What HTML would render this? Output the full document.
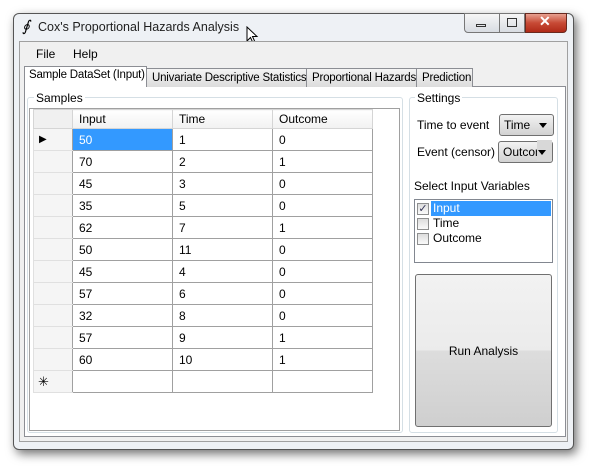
<!DOCTYPE html><html><head><style>
*{box-sizing:border-box;margin:0;padding:0}
body{width:592px;height:468px;background:#fff;font-family:"Liberation Sans",sans-serif;font-size:12px;color:#000;position:relative;overflow:hidden}
.a{position:absolute;white-space:nowrap}
.win{left:13px;top:13px;width:561px;height:437px;background:#eef1f5;border:1px solid #555;border-radius:6px;box-shadow:3px 4px 10px rgba(0,0,0,.55)}
.client{left:19px;top:41px;width:549px;height:401px;background:#f0f0f0;border:1px solid #a0a0a0}
.tab{top:68px;height:19px;border:1px solid #8c8e94;border-bottom:none;background:linear-gradient(#f4f4f4,#dcdcdc);padding:3px 0 0 5px;font-size:11.5px;letter-spacing:-0.2px}
.panel{left:24px;top:86px;width:542px;height:351px;background:#fff;border:1px solid #8c8e94}
.grp{border:1px solid #d5dfe5;border-radius:3px}
.lbl{background:#fff;padding:0 2px}
td{border:1px solid #a0a0a0;height:22px;padding:0 0 0 6px;font-size:12px}
table{border-collapse:collapse;position:absolute;left:33px;top:109px}
.hd td{height:19px;background:linear-gradient(#fff,#f1f1f1);border-color:#d5d5d5;}
.rh{background:#f5f5f5;border-color:#e0e0e0 #a0a0a0 #e0e0e0 #e0e0e0;width:39px;padding:0}
.cb{display:inline-block;width:12px;height:12px;border:1px solid #8e8f8f;background:linear-gradient(#ddd,#fafafa);vertical-align:middle;margin-right:4px}
.dd{height:22px;border:1px solid #707070;border-radius:3px;background:linear-gradient(#f2f2f2,#d2d2d2);padding:3px 0 0 4px;overflow:hidden}
.arr{position:absolute;border:4px solid transparent;border-top:5px solid #000}
</style></head><body>
<div class="a win"></div>
<div class="a" style="left:22px;top:17px;font-family:'Liberation Serif',serif;font-style:italic;font-size:15px">∮</div>
<div class="a" style="left:38px;top:20px;font-size:12.5px;color:#1e1e1e">Cox's Proportional Hazards Analysis</div>
<div class="a" style="left:464px;top:13px;width:36px;height:20px;border:1px solid #777;border-radius:0 0 0 4px;background:linear-gradient(#f6f6f6,#d8dce2)"></div>
<div class="a" style="left:476px;top:24px;width:10px;height:3px;border:1px solid #333"></div>
<div class="a" style="left:499px;top:13px;width:26px;height:20px;border:1px solid #777;background:linear-gradient(#f6f6f6,#d8dce2)"></div>
<div class="a" style="left:507px;top:18px;width:10px;height:9px;border:1px solid #333"></div>
<div class="a" style="left:525px;top:13px;width:42px;height:20px;border:1px solid #6a2a20;border-radius:0 0 4px 0;background:linear-gradient(#e8a090,#c74a35 50%,#b02a18)"></div>
<div class="a" style="left:539px;top:13px;color:#fff;font-weight:bold;font-size:14px">✕</div>
<svg class="a" style="left:246px;top:26px" width="14" height="20"><path d="M1 1 L1 15 L4.5 11.5 L7 17 L9 16 L6.5 10.5 L11 10.5 Z" fill="#fff" stroke="#000"/></svg>
<div class="a client"></div>
<div class="a" style="left:36px;top:47px">File</div>
<div class="a" style="left:73px;top:47px">Help</div>
<div class="a panel"></div>
<div class="a tab" style="left:146px;width:161px">Univariate Descriptive Statistics</div>
<div class="a tab" style="left:306px;width:111px">Proportional Hazards</div>
<div class="a tab" style="left:416px;width:57px">Prediction</div>
<div class="a tab" style="left:24px;top:66px;height:21px;width:123px;background:#fff;padding:2px 0 0 4px">Sample DataSet (Input)</div>
<div class="a grp" style="left:27px;top:97px;width:376px;height:336px"></div>
<div class="a lbl" style="left:34px;top:91px">Samples</div>
<div class="a" style="left:29px;top:108px;width:371px;height:323px;border:1px solid #a0a0a0;background:#fff"></div>
<table>
<tr class="hd"><td class="rh" style="background:#f0f0f0"></td><td style="width:100px">Input</td><td style="width:100px">Time</td><td style="width:100px">Outcome</td></tr>
<tr><td class="rh" style="font-size:10px;padding-left:5px">▶</td><td style="background:#3399ff;color:#fff">50</td><td>1</td><td>0</td></tr>
<tr><td class="rh"></td><td>70</td><td>2</td><td>1</td></tr>
<tr><td class="rh"></td><td>45</td><td>3</td><td>0</td></tr>
<tr><td class="rh"></td><td>35</td><td>5</td><td>0</td></tr>
<tr><td class="rh"></td><td>62</td><td>7</td><td>1</td></tr>
<tr><td class="rh"></td><td>50</td><td>11</td><td>0</td></tr>
<tr><td class="rh"></td><td>45</td><td>4</td><td>0</td></tr>
<tr><td class="rh"></td><td>57</td><td>6</td><td>0</td></tr>
<tr><td class="rh"></td><td>32</td><td>8</td><td>0</td></tr>
<tr><td class="rh"></td><td>57</td><td>9</td><td>1</td></tr>
<tr><td class="rh"></td><td>60</td><td>10</td><td>1</td></tr>
<tr><td class="rh" style="padding-left:4px;font-size:13px">✳</td><td></td><td></td><td></td></tr>
</table>
<div class="a grp" style="left:409px;top:97px;width:149px;height:336px"></div>
<div class="a lbl" style="left:415px;top:91px">Settings</div>
<div class="a" style="left:417px;top:118px">Time to event</div>
<div class="a dd" style="left:499px;top:114px;width:55px">Time</div>
<div class="a arr" style="left:539px;top:123px"></div>
<div class="a" style="left:417px;top:145px">Event (censor)</div>
<div class="a dd" style="left:498px;top:141px;width:55px;padding-right:16px">Outcome</div>
<div class="a" style="left:537px;top:140px;width:15px;height:21px;background:#d8d8d8"></div>
<div class="a arr" style="left:538px;top:150px"></div>
<div class="a" style="left:414px;top:179px">Select Input Variables</div>
<div class="a" style="left:414px;top:199px;width:139px;height:64px;border:1px solid #828790;background:#fff"></div>
<div class="a" style="left:431px;top:201px;width:120px;height:15px;background:#3399ff"></div>
<div class="a" style="left:417px;top:201px;color:#fff"><span class="cb" style="text-align:center;font-size:11px;color:#335;line-height:10px">✓</span>Input</div>
<div class="a" style="left:417px;top:216px"><span class="cb"></span>Time</div>
<div class="a" style="left:417px;top:231px"><span class="cb"></span>Outcome</div>
<div class="a" style="left:415px;top:274px;width:137px;height:153px;border:1px solid #707070;border-radius:3px;background:linear-gradient(#f2f2f2,#ebebeb 50%,#dddddd 50%,#cfcfcf)"></div>
<div class="a" style="left:415px;top:344px;width:137px;text-align:center">Run Analysis</div>
</body></html>
